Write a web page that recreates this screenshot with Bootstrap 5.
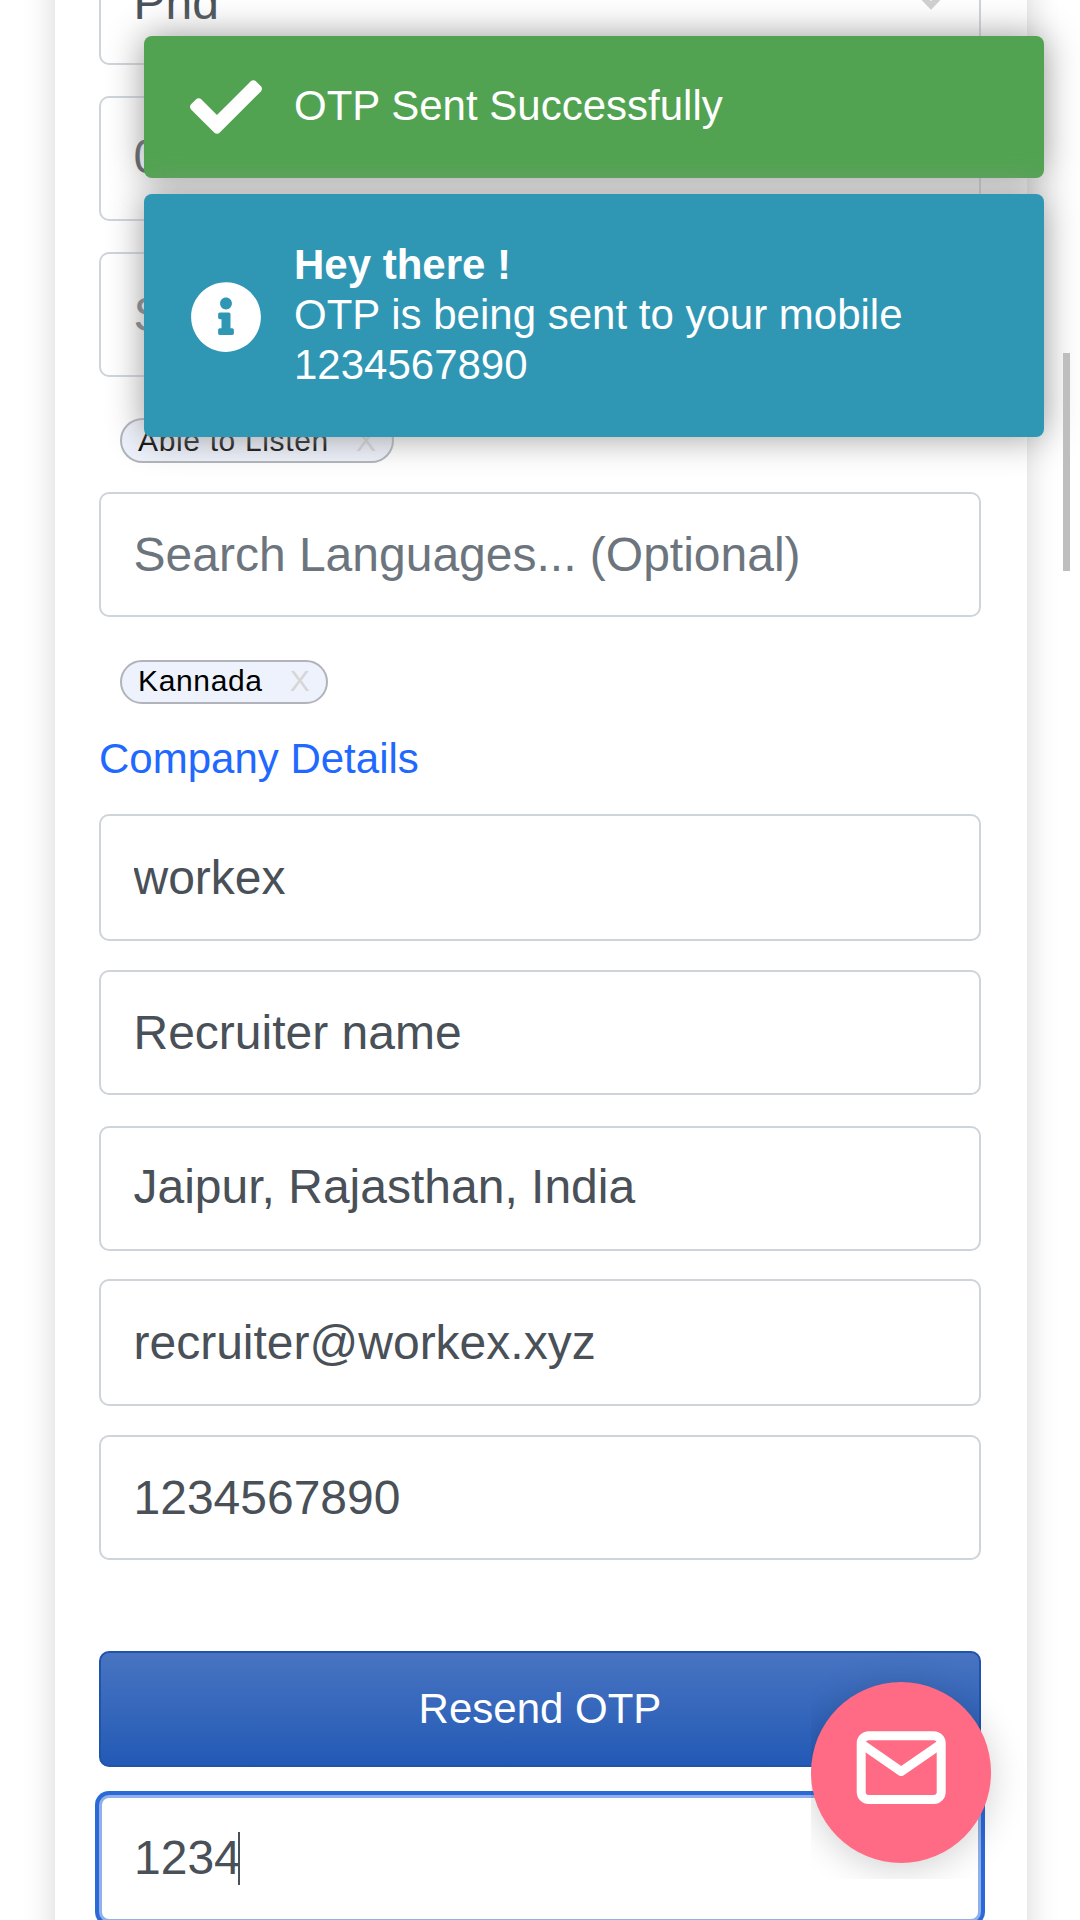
<!DOCTYPE html>
<html lang="en">
<head>
<meta charset="utf-8">
<meta name="viewport" content="width=device-width, initial-scale=1">
<title>Post a job</title>
<link href="https://cdn.jsdelivr.net/npm/bootstrap@5.3.0/dist/css/bootstrap.min.css" rel="stylesheet">
<style>
html, body { height: 1920px; overflow: hidden; }
body { background: #fff; font-family: "Liberation Sans", Arial, sans-serif; }
.screen { width: 1080px; height: 1920px; }
.sheet { width: 972px; height: 2060px; margin: -90px 0 0 55px; padding: 30px 46px 0 44px; background: #fff; box-shadow: 0 0 30px rgba(0,0,0,.17); }
.sheet .form-control { height: 125px; flex: none; padding: 0 32.5px; border: 2px solid #ced4da; border-radius: 10px; font-size: 48px; line-height: 1.5; color: #495057; box-shadow: none; }
.sheet .form-control::placeholder { color: #6c757d; opacity: 1; }
.sheet .field-tall { height: 127px; padding-bottom: 1px; }
.sheet .text-raised { padding-bottom: 4px; }
.gap-field { margin-top: 31px; }
.gap-tight { margin-top: 29px; }
.select-wrap { flex: none; }
.select-wrap svg { position: absolute; right: 34px; top: 42px; }
.chip { flex: none; height: 45px; margin-left: 21px; padding: 0 16px 0 16px; border: 2px solid #b0b3b9; border-radius: 23px; background: #eef2fc; color: #000; font-size: 30px; letter-spacing: .65px; line-height: 1; }
.chip-short { height: 44px; padding-bottom: 3px; }
.chip-x { color: #d6d6d6; letter-spacing: 0; margin-left: 27px; }
.section-title { flex: none; margin: 24px 0 0; height: 62px; line-height: 62px; font-size: 42px; font-weight: 400; color: #2168ff; }
.btn-resend { flex: none; height: 116px; margin-top: 91px; padding: 0 0 2px; font-size: 42px; color: #fff; border: 2px solid #2153aa; border-radius: 10px; background: linear-gradient(#4874c1, #235ab6); }
.otp-box { flex: none; height: 127px; margin-top: 28px; padding: 0 0 1px 32px; border: 3px solid #8fb0e8; border-radius: 10px; box-shadow: 0 0 0 4px #2b69d9; font-size: 48px; color: #495057; background: #fff; }
.caret { width: 2px; height: 53px; background: #495057; margin-left: -3px; }
.toasts { left: 144px; top: 36px; width: 900px; z-index: 5; }
.note { border-radius: 8px; padding-left: 46px; color: #fff; font-size: 42px; line-height: 49.7px; box-shadow: 0 0 36px #999; }
.note svg { flex: none; width: 72px; height: 72px; margin-right: 32px; }
.note-ok { height: 141.6px; background: #51a351; }
.note-ok svg { margin-top: 1px; }
.note-ok .note-text { margin-top: -2px; }
.note-info { height: 242.6px; margin-top: 16.6px; background: #2f96b4; }
.note-info svg { margin-top: 3px; }
.note-info .note-text { margin-top: -1px; }
.fab-clip { left: 811px; top: 1650px; width: 220px; height: 229px; overflow: hidden; z-index: 4; }
.fab { width: 180px; height: 181px; margin-top: 32px; border-radius: 50%; background: #ff6a85; box-shadow: 0 6px 36px rgba(0,0,0,.18); }
.scroll-thumb { left: 1063px; top: 353px; width: 7px; height: 218px; background: #bebebe; z-index: 6; }
</style>
</head>
<body>
<div class="screen position-relative overflow-hidden">
  <form class="sheet d-flex flex-column align-items-stretch">
    <div class="select-wrap position-relative">
      <input class="form-control" value="Phd">
      <svg width="32" height="32" viewBox="0 0 32 32" fill="none" stroke="#d0d0d0" stroke-width="6"><path d="M3 10 16 23.500 29 10"/></svg>
    </div>
    <input class="form-control gap-field text-raised" value="0">
    <input class="form-control gap-field" placeholder="Search Skills... (Optional)">
    <span class="chip d-inline-flex align-items-center align-self-start" style="margin-top:41px">Able to Listen<span class="chip-x">X</span></span>
    <input class="form-control gap-tight" placeholder="Search Languages... (Optional)">
    <span class="chip chip-short d-inline-flex align-items-center align-self-start" style="margin-top:43px">Kannada<span class="chip-x">X</span></span>
    <h2 class="section-title">Company Details</h2>
    <input class="form-control field-tall" style="margin-top:24px" value="workex">
    <input class="form-control gap-tight" value="Recruiter name">
    <input class="form-control gap-field text-raised" value="Jaipur, Rajasthan, India">
    <input class="form-control field-tall" style="margin-top:28px" value="recruiter@workex.xyz">
    <input class="form-control gap-tight" value="1234567890">
    <button type="button" class="btn btn-resend w-100">Resend OTP</button>
    <div class="otp-box d-flex align-items-center"><span>1234</span><span class="caret"></span></div>
  </form>

  <div class="toasts position-absolute">
    <div class="note note-ok d-flex align-items-center">
      <svg viewBox="0 0 512 512" fill="#fff"><path d="M173.9 439.4 7.5 273c-10-10-10-26.200 0-36.200l36.200-36.200c10-10 26.200-10 36.200 0L192 312.700 432.100 72.600c10-10 26.200-10 36.200 0l36.200 36.200c10 10 10 26.200 0 36.200L210.100 439.400c-10 10-26.200 10-36.200 0z"/></svg>
      <div class="note-text">OTP Sent Successfully</div>
    </div>
    <div class="note note-info d-flex align-items-center">
      <svg viewBox="0 0 512 512" fill="#fff"><path d="M256 8C119 8 8 119.100 8 256s111 248 248 248 248-111 248-248S393 8 256 8zm0 110c23.200 0 42 18.800 42 42s-18.800 42-42 42-42-18.800-42-42 18.800-42 42-42zm56 254c0 6.600-5.400 12-12 12h-88c-6.600 0-12-5.400-12-12v-24c0-6.600 5.400-12 12-12h12v-64h-12c-6.600 0-12-5.400-12-12v-24c0-6.600 5.400-12 12-12h64c6.600 0 12 5.400 12 12v100h12c6.600 0 12 5.400 12 12v24z"/></svg>
      <div class="note-text"><strong>Hey there !</strong><br>OTP is being sent to your mobile<br>1234567890</div>
    </div>
  </div>

  <div class="fab-clip position-absolute">
    <div class="fab">
      <svg width="180" height="181" viewBox="0 0 180 181" fill="none" stroke="#fff" stroke-width="9"><rect x="50.200" y="53.800" width="80" height="63.700" rx="7.500"/><path d="M50.500 62 90.200 89.500 130 62" stroke-linejoin="round"/></svg>
    </div>
  </div>
  <div class="scroll-thumb position-absolute"></div>
</div>
<script src="https://cdn.jsdelivr.net/npm/bootstrap@5.3.0/dist/js/bootstrap.bundle.min.js"></script>
</body>
</html>
